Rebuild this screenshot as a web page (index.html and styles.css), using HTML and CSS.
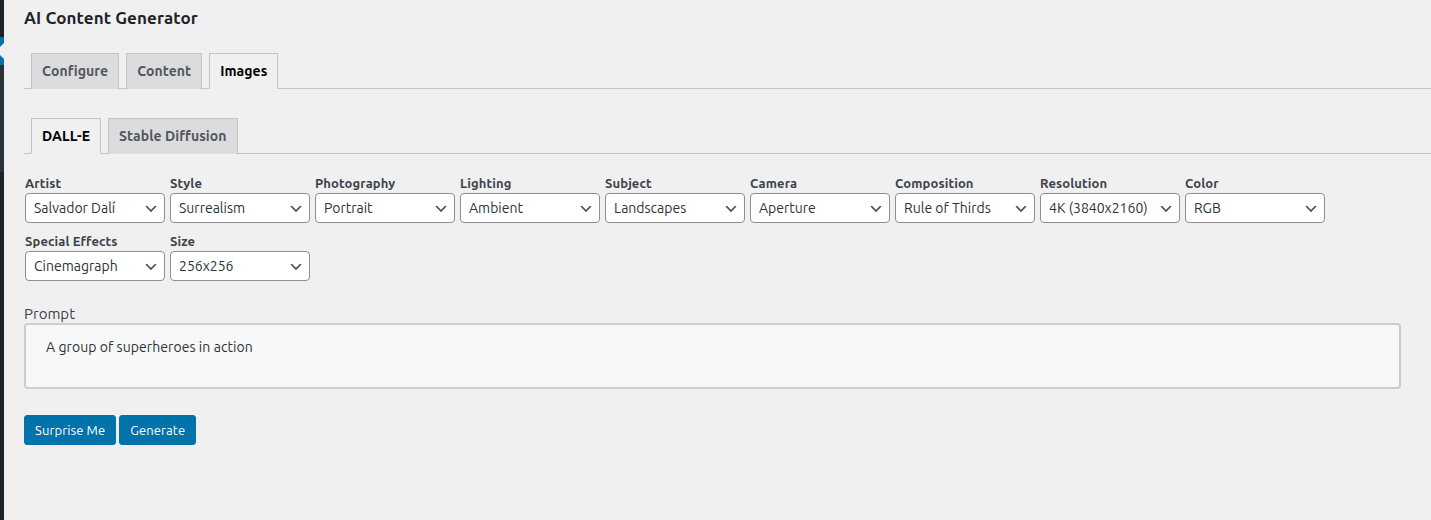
FILE: index.html
```html
<!DOCTYPE html>
<html lang="en">
<head>
<meta charset="utf-8">
<title>AI Content Generator</title>
<link rel="stylesheet" href="styles.css">
</head>
<body>
<div class="layout">
  <aside class="sidebar">
    <div class="sb-top"></div>
    <div class="sb-current"><span class="sb-arrow"></span></div>
    <div class="sb-sub"></div>
    <div class="sb-rest"></div>
  </aside>
  <main class="content">
    <h1 class="title">AI Content Generator</h1>
    <nav class="tabs tabs-main">
      <a class="tab">Configure</a>
      <a class="tab">Content</a>
      <a class="tab active">Images</a>
    </nav>
    <nav class="tabs tabs-sub">
      <a class="tab active">DALL-E</a>
      <a class="tab">Stable Diffusion</a>
    </nav>
    <div class="fields">
      <div class="field"><label>Artist</label><select><option>Salvador Dalí</option></select></div>
      <div class="field"><label>Style</label><select><option>Surrealism</option></select></div>
      <div class="field"><label>Photography</label><select><option>Portrait</option></select></div>
      <div class="field"><label>Lighting</label><select><option>Ambient</option></select></div>
      <div class="field"><label>Subject</label><select><option>Landscapes</option></select></div>
      <div class="field"><label>Camera</label><select><option>Aperture</option></select></div>
      <div class="field"><label>Composition</label><select><option>Rule of Thirds</option></select></div>
      <div class="field"><label>Resolution</label><select><option>4K (3840x2160)</option></select></div>
      <div class="field"><label>Color</label><select><option>RGB</option></select></div>
      <div class="field"><label>Special Effects</label><select><option>Cinemagraph</option></select></div>
      <div class="field"><label>Size</label><select><option>256x256</option></select></div>
    </div>
    <div class="prompt">
      <label class="prompt-label">Prompt</label>
      <textarea class="prompt-input">A group of superheroes in action</textarea>
    </div>
    <div class="actions">
      <button class="btn">Surprise Me</button>
      <button class="btn">Generate</button>
    </div>
  </main>
</div>
</body>
</html>
```

FILE: styles.css
```css
* { box-sizing: border-box; }
html, body { margin: 0; padding: 0; height: 100%; }
body {
  background: #f0f0f1;
  font-family: "Ubuntu", "Open Sans", "Noto Sans", sans-serif;
  color: #3c434a;
  font-size: 13px;
  overflow: hidden;
}
.layout { display: flex; min-height: 520px; }
.sidebar {
  width: 4px;
  flex: 0 0 4px;
  display: flex;
  flex-direction: column;
}
.sb-top { height: 37px; background: #1d2327; }
.sb-current { height: 28px; background: #0073aa; position: relative; overflow: hidden; }
.sb-arrow {
  position: absolute;
  right: 0;
  top: 6px;
  width: 0; height: 0;
  border-top: 8px solid transparent;
  border-bottom: 8px solid transparent;
  border-right: 8px solid #f0f0f1;
}
.sb-sub { height: 107px; background: #2c3338; }
.sb-rest { flex: 1; background: #1d2327; }

.content { flex: 1; padding-left: 20px; }
.title {
  margin: 0;
  padding-top: 7px;
  font-size: 17px;
  line-height: 22px;
  font-weight: 700;
  letter-spacing: 0.1px;
  color: #1d2327;
}
.tabs {
  display: flex;
  gap: 7px;
  padding-left: 7px;
  border-bottom: 1px solid #c3c4c7;
}
.tabs-main { margin-top: 24px; }
.tabs-sub { margin-top: 29px; }
.tab {
  display: block;
  padding: 5px 10px;
  font-size: 14px;
  line-height: 24px;
  font-weight: 600;
  letter-spacing: 0.07px;
  color: #50575e;
  background: #dcdcde;
  border: 1px solid #c3c4c7;
  border-bottom: none;
  margin-bottom: -1px;
  height: 36px;
}
.tab.active {
  background: #f0f0f1;
  color: #000;
  border-bottom: 1px solid #f0f0f1;
}
.fields {
  display: flex;
  flex-wrap: wrap;
  column-gap: 5px;
  row-gap: 10px;
  margin-top: 21px;
  padding-left: 1px;
  width: 1310px;
}
.field { display: flex; flex-direction: column; width: 140px; }
.field label {
  font-size: 13px;
  line-height: 17px;
  padding-bottom: 1px;
  font-weight: 700;
  letter-spacing: 0.12px;
  color: #3c434a;
}
select {
  appearance: none;
  -webkit-appearance: none;
  font-family: inherit;
  font-size: 14px;
  color: #2c3338;
  height: 30px;
  line-height: 28px;
  width: 140px;
  padding: 0 24px 0 8px;
  border: 1px solid #8c8f94;
  border-radius: 4px;
  background: #fff url("data:image/svg+xml;charset=US-ASCII,%3Csvg%20width%3D%2220%22%20height%3D%2220%22%20xmlns%3D%22http%3A%2F%2Fwww.w3.org%2F2000%2Fsvg%22%3E%3Cpath%20d%3D%22M5%206l5%205%205-5%202%201-7%207-7-7%202-1z%22%20fill%3D%22%23555%22%2F%3E%3C%2Fsvg%3E") no-repeat right 5px top 55%;
  background-size: 16px 16px;
}
.prompt { margin-top: 24px; display: flex; flex-direction: column; }
.prompt-label {
  font-size: 15px;
  line-height: 18px;
  color: #3c434a;
}
.prompt-input {
  width: 1377px;
  height: 66px;
  resize: none;
  border: 2px solid #ccc;
  border-radius: 4px;
  background: #f8f8f8;
  padding: 12px 20px;
  font-family: inherit;
  font-size: 14px;
  line-height: 20px;
  letter-spacing: 0.06px;
  color: #2c3338;
}
.actions { margin-top: 26px; display: flex; gap: 3px; }
.btn {
  height: 30px;
  padding: 0 10px;
  font-family: inherit;
  font-size: 13px;
  line-height: 28px;
  letter-spacing: 0.1px;
  color: #fff;
  background: #0073aa;
  border: 1px solid #0073aa;
  border-radius: 3px;
}
```
